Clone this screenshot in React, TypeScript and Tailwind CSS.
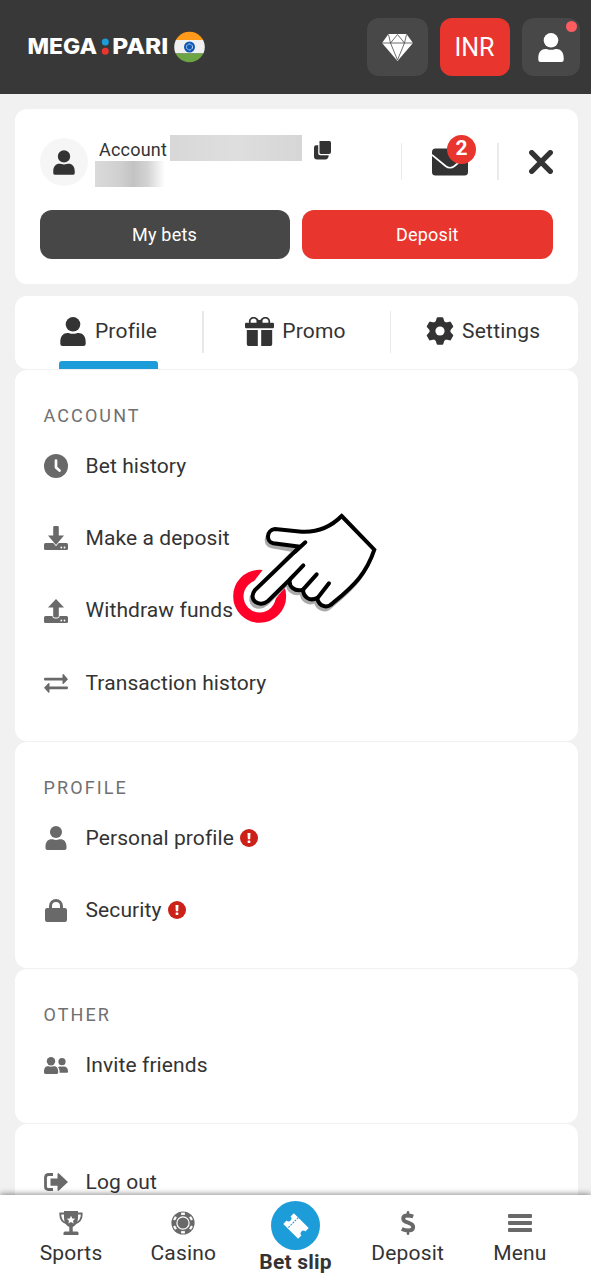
import type { ReactNode } from "react";

type IconProps = { className?: string };

const UserIcon = ({ className = "" }: IconProps) => (
  <svg viewBox="0 0 26 29" className={className} fill="currentColor">
    <circle cx="13" cy="7.3" r="7.3" />
    <path d="M0.3 25C0.3 19 3.5 16 7.5 16c1.7 0 3 .8 5.500.8s3.800-.8 5.500-.8c4 0 7.200 3 7.200 9v1.800q0 2.200-2.200 2.200h-21q-2.200 0-2.200-2.200z" />
  </svg>
);

const DiamondIcon = () => (
  <svg viewBox="0 0 31 27" className="h-[27px] w-[31px]">
    <path d="M6.500 0h18l6.500 9-15.500 18L0 9z" fill="#fff" />
    <path d="M0 9h31M6.500.5l2 8.500 7 17 7-17 2-8.500M8.500 9l7-8.500 7 8.500" fill="none" stroke="#484848" strokeWidth="0.8" />
  </svg>
);

const CopyIcon = () => (
  <svg viewBox="0 0 17 19" className="h-[19px] w-[17px]" fill="#333">
    <path d="M5.500 0h10q1.500 0 1.500 1.500V11q0 2-2 2H7q-1.500 0-1.500-1.500z" />
    <path d="M2 4.300h2.200v8q0 2 2 2h8.500c0 2.500-1.300 4.200-3.500 4.200H3q-3 0-3-3v-9q0-2.200 2-2.200z" />
  </svg>
);

const MailIcon = () => (
  <svg viewBox="0 0 36 28" className="h-7 w-9">
    <rect y="0.500" width="36" height="27" rx="3.500" fill="#333" />
    <path d="M0 6.800 13.500 18q4.500 3.500 9 0L36 6.800" fill="none" stroke="#fff" strokeWidth="1.700" />
  </svg>
);

const GiftIcon = () => (
  <svg viewBox="0 0 29 29" className="h-[29px] w-[29px]" fill="#333">
    <path d="M14.500 6C12 1 9 0 6.500 1.200 4.500 2.500 4.500 4.500 5 6M14.500 6C17 1 20 0 22.500 1.200c2 1.300 2 3.300 1.500 4.800" fill="none" stroke="#333" strokeWidth="1.700" />
    <path d="M11.500 3h6v4h-6z" />
    <rect y="5.700" width="29" height="5.600" rx="1.200" />
    <path d="M1.800 13h11v16H3.500q-1.700 0-1.700-1.700zM16.200 13h11v14.300q0 1.700-1.700 1.700h-9.300z" />
  </svg>
);

const GearIcon = () => (
  <svg viewBox="-14 -14 28 28" className="h-7 w-7" fill="#333">
    {[0, 60, 120, 180, 240, 300].map((a) => (
      <path key={a} d="M-4.800-8-3.300-13q.2-.8 1-.8h4.600q.8 0 1 .8L4.800-8z" transform={`rotate(${a})`} />
    ))}
    <circle r="10.500" />
    <circle r="4.600" fill="#fff" />
  </svg>
);

const ClockIcon = () => (
  <svg viewBox="0 0 24 24" className="h-6 w-6">
    <circle cx="12" cy="12" r="12" fill="#696969" />
    <path d="M12 6.500v7l3.500 3" fill="none" stroke="#fff" strokeWidth="2.700" strokeLinecap="round" strokeLinejoin="round" />
  </svg>
);

const Tray = () => (
  <>
    <path d="M1.500 17h21q1.500 0 1.500 1.500v4q0 1.500-1.500 1.500h-21Q0 24 0 22.500v-4Q0 17 1.500 17z" />
    <circle cx="17.300" cy="21.500" r="0.900" fill="#fff" />
    <circle cx="20.500" cy="21.500" r="0.900" fill="#fff" />
  </>
);

const DepositIcon = () => (
  <svg viewBox="0 0 24 24" className="h-6 w-6" fill="#696969">
    <Tray />
    <path d="M9.200 1q0-1 1-1h3.600q1 0 1 1v8.500H20L12 19 4 9.500h5.200z" stroke="#fff" strokeWidth="1.500" paintOrder="stroke" />
  </svg>
);

const WithdrawIcon = () => (
  <svg viewBox="0 0 24 24" className="h-6 w-6" fill="#696969">
    <Tray />
    <path d="M12 0 20 8.500h-5.200V17q0 1.500-1.500 1.500h-2.600q-1.500 0-1.500-1.500V8.500H4z" stroke="#fff" strokeWidth="1.800" paintOrder="stroke" />
  </svg>
);

const SwapIcon = () => (
  <svg viewBox="0 0 24 19" className="h-[19px] w-6" fill="#696969">
    <path d="M1 3.800h17.500V1q0-1.300 1.200-.7L24 5.200l-4.300 4.500q-1.200.6-1.200-.8V6.600H1Q0 6.600 0 5.200T1 3.800zM23 12.400H5.500V10q0-1.300-1.200-.7L0 13.800l4.300 4.700q1.200.6 1.200-.8V15.200H23q1 0 1-1.400t-1-1.400z" />
  </svg>
);

const LockIcon = () => (
  <svg viewBox="0 0 22 23" className="h-[23px] w-[22px]" fill="#696969">
    <path d="M5.500 11V7a5.500 5.500 0 0 1 11 0v4" fill="none" stroke="#696969" strokeWidth="3" />
    <rect y="9" width="22" height="14" rx="2.200" />
  </svg>
);

const FriendsIcon = () => (
  <svg viewBox="0 0 24 17" className="h-[17px] w-6" fill="#696969">
    <circle cx="7" cy="4.200" r="4.200" />
    <path d="M0 15c0-4 1.500-5.700 4-5.700 1 0 1.600.4 3 .4s2-.4 3-.4c2.500 0 4.200 1.700 4.200 5.700v.6q0 1.400-1.400 1.400H1.400Q0 17 0 15.600z" />
    <circle cx="18" cy="4.700" r="3.600" />
    <path d="M14 10.300c.8-.6 1.600-.9 4-.6 4-.7 6 1.200 6 4.500 0 1.200-.4 1.600-1.200 1.600h-7.200c.2-2.300-.3-4.200-1.600-5.500z" />
  </svg>
);

const LogoutIcon = () => (
  <svg viewBox="0 0 24 18" className="h-[18px] w-6" fill="#696969">
    <path d="M9 1.500H4.500q-3 0-3 3v9q0 3 3 3H9" fill="none" stroke="#696969" strokeWidth="2.800" />
    <path d="M6.500 5.500h7V1q0-1.200 1.200-.7L24 9l-9.300 8.700q-1.200.5-1.200-.7v-4.300h-7z" />
  </svg>
);

const TrophyIcon = () => (
  <svg viewBox="0 0 24 24" className="h-6 w-6">
    <path d="M6 2.500H1.300C1 7 3 11 8 12.500M18 2.500h4.700C23 7 21 11 16 12.500" fill="none" stroke="#696969" strokeWidth="1.800" />
    <path d="M5 0h14v6c0 5-2 8.500-5.300 10v4.500H18q1.500 0 1.500 1.500v2h-15v-2q0-1.500 1.500-1.500h4.300V16C7 14.500 5 11 5 6z" fill="#696969" />
    <path d="m12 4.700 1.250 2.700 2.950.3-2.200 2 .65 2.900L12 11.100l-2.650 1.500.65-2.900-2.200-2 2.950-.3z" fill="#fff" />
  </svg>
);

const ChipIcon = () => (
  <svg viewBox="-12 -12 24 24" className="h-6 w-6">
    <circle r="11.600" fill="#696969" />
    {[0, 60, 120, 180, 240, 300].map((a) => (
      <rect key={a} x="-1.900" y="-10.400" width="3.800" height="2.300" fill="#fff" transform={`rotate(${a})`} />
    ))}
    <circle r="6.100" fill="none" stroke="#fff" strokeWidth="1.200" />
  </svg>
);

const TicketIcon = () => (
  <svg viewBox="-14 -14 28 28" className="h-7 w-7">
    <g transform="rotate(45)">
      <path d="M-10.500-7.500h21v4.700a2.800 2.800 0 0 0 0 5.600v4.700h-21V2.800a2.800 2.800 0 0 0 0-5.600z" fill="#fff" />
      <path d="M-4.300-7.500v15" stroke="#1c9cd9" strokeWidth="1" strokeDasharray="2 1" />
    </g>
  </svg>
);

const DollarIcon = () => (
  <svg viewBox="0 0 16 24" className="h-6 w-4" fill="none" stroke="#696969">
    <path d="M8 1.300v4M8 19v3.700" strokeWidth="2.600" strokeLinecap="round" />
    <path d="M13.200 5.500C9 4 3.200 3.700 3.200 7.700c0 5 10 3 10 8.200 0 4.400-6.600 4.300-11.400 2" strokeWidth="3.900" />
  </svg>
);

const MenuIcon = () => (
  <svg viewBox="0 0 24 18" className="h-[18px] w-6" fill="#696969">
    <rect width="24" height="4" rx="1" />
    <rect y="7" width="24" height="4" rx="1" />
    <rect y="14" width="24" height="4" rx="1" />
  </svg>
);

const AlertBadge = () => (
  <svg viewBox="0 0 18 18" className="mb-px ml-1.5 h-[18px] w-[18px]">
    <circle cx="9" cy="9" r="9" fill="#cb2119" />
    <path d="M7.500 4h3l-.3 6.200H7.800z" fill="#fff" />
    <rect x="7.600" y="11.400" width="2.800" height="2.500" rx="0.600" fill="#fff" />
  </svg>
);

const Logo = () => (
  <svg viewBox="0 0 178 32" className="h-8 w-[178px]">
    <g fill="#fff" fontFamily="Inter, sans-serif" fontWeight="800" fontSize="21">
      <text x="-0.500" y="23.200" textLength="69.500" lengthAdjust="spacingAndGlyphs">MEGA</text>
      <text x="84.300" y="23.200" textLength="56" lengthAdjust="spacingAndGlyphs">PARI</text>
    </g>
    <circle cx="77.300" cy="11" r="3.500" fill="#1c9cd9" />
    <circle cx="77.300" cy="20.300" r="3.500" fill="#e8362e" />
    <clipPath id="flag">
      <circle cx="161.500" cy="16" r="15.300" />
    </clipPath>
    <g clipPath="url(#flag)">
      <path d="M146 0h32v9h-32z" fill="#ff9a1a" />
      <path d="M146 9h32v13.500h-32z" fill="#f0f0f0" />
      <path d="M146 22.500h32V32h-32z" fill="#6da544" />
    </g>
    <circle cx="161.500" cy="16" r="5.500" fill="#0d57b7" />
    <circle cx="161.500" cy="16" r="3" fill="none" stroke="#e4ecf5" strokeWidth="0.900" strokeDasharray="2.400 0.750" />
  </svg>
);

const PointerHand = () => (
  <svg viewBox="0 0 510 420" className="pointer-events-none absolute left-[220px] top-[500px] h-[140px] w-[170px]" strokeLinecap="round" strokeLinejoin="round">
    <circle cx="119" cy="289" r="64" fill="none" stroke="#ff0028" strokeWidth="31" />
    <path d="M235 140 123 285" stroke="#fff" strokeWidth="84" />
    <path
      d="M365 48 463 149C440 218 405 255 340 308C320 329 297 318 291 294C270 305 250 292 249 269C225 276 204 260 210 238L145 302C118 325 82 300 105 270L228 142 160 130C138 126 138 90 165 87L245 95C300 98 335 78 365 48z"
      transform="translate(-5 10)"
      fill="#aaa"
      stroke="#aaa"
      strokeWidth="10"
    />
    <path
      d="M365 48 463 149C440 218 405 255 340 308C320 329 297 318 291 294C270 305 250 292 249 269C225 276 204 260 210 238L145 302C118 325 82 300 105 270L240 140 160 130C138 126 138 90 165 87L245 95C300 98 335 78 365 48z"
      fill="#fff"
      stroke="#000"
      strokeWidth="12"
      strokeLinejoin="miter"
    />
    <path d="M225 155 256 127M210 238 250 196M249 269 290 223M291 296 327 250" fill="none" stroke="#000" strokeWidth="12" />
  </svg>
);

function Row({ icon, label, alert }: { icon: ReactNode; label: string; alert?: boolean }) {
  return (
    <li className="flex h-[72.400px] items-center">
      <span className="mb-px flex w-6 justify-center">{icon}</span>
      <span className="ml-[18px] text-[21px] tracking-[0.100px]">{label}</span>
      {alert && <AlertBadge />}
    </li>
  );
}

function Section({ title, children }: { title?: string; children: ReactNode }) {
  return (
    <section className="mb-[1.500px] rounded-xl bg-white px-[28.500px] pb-[20.800px] pt-[22px]">
      {title && <h2 className="pb-[1.700px] pt-[9.500px] text-[18px] leading-[27px] tracking-[2.100px] text-[#707070]">{title}</h2>}
      <ul>{children}</ul>
    </section>
  );
}

const navItems = [
  { label: "Sports", icon: <TrophyIcon /> },
  { label: "Casino", icon: <ChipIcon /> },
  { label: "Bet slip", icon: <TicketIcon />, active: true },
  { label: "Deposit", icon: <DollarIcon /> },
  { label: "Menu", icon: <MenuIcon /> },
];

export default function App() {
  return (
    <div className="relative flex h-[1280px] w-[591px] flex-col overflow-hidden bg-[#f1f1f1] font-['Roboto',sans-serif] text-[#333]">
      <header className="flex h-[94px] shrink-0 items-center bg-[#383838] pl-7 pr-[11.500px]">
        <Logo />
        <div className="ml-auto flex gap-3">
          <button className="flex h-[58px] w-[61px] items-center justify-center rounded-xl bg-[#484848]">
            <DiamondIcon />
          </button>
          <button className="h-[58px] w-[70px] rounded-xl bg-[#e8362e] pt-0.5 text-[25px] text-white">INR</button>
          <button className="relative flex h-[58px] w-[58px] items-center justify-center rounded-xl bg-[#484848] text-white">
            <UserIcon className="h-[29px] w-[26px]" />
            <span className="absolute right-[3px] top-[3px] h-[11px] w-[11px] rounded-full bg-[#ff5c5f]" />
          </button>
        </div>
      </header>

      <main className="min-h-0 flex-1 overflow-hidden pl-[15px] pr-[13.500px] pt-[15px]">
        {/* Account summary */}
        <section className="h-[174.500px] rounded-xl bg-white pl-[24.500px] pr-[24.500px] pt-[26px]">
          <div className="flex h-[52px] items-start">
            <div className="mt-[3px] flex h-12 w-12 items-center justify-center rounded-full bg-[#f6f6f6]">
              <UserIcon className="h-[25px] w-[22px]" />
            </div>
            <div className="ml-[7.500px]">
              <div className="flex h-[26px] items-center">
                <span className="ml-1 w-[71px] pt-[3px] text-[18px] leading-[23px] tracking-[0.200px]">Account</span>
                <span className="h-[26px] w-[132px] bg-gradient-to-r from-[#d8d8d8] via-[#dedede] to-[#d6d6d6]" />
                <span className="ml-3 mt-[4px]">
                  <CopyIcon />
                </span>
              </div>
              <div className="h-[26px] w-[70px] bg-[linear-gradient(90deg,#dadada_0%,#d0d0d0_35%,#c3c3c3_55%,#d3d3d3_75%,#ffffff_100%)]" />
            </div>
            <div className="ml-auto mt-[8px] flex items-center">
              <span className="h-[37px] w-[1.500px] bg-[#ebebeb]" />
              <span className="relative ml-[30px] mr-[29px]">
                <MailIcon />
                <span className="absolute left-[15px] top-[-13px] flex h-[29px] w-[29px] items-center justify-center rounded-full bg-[#e8362e] text-[21px] font-bold text-white">
                  2
                </span>
              </span>
              <span className="h-[37px] w-[1.500px] bg-[#ebebeb]" />
              <svg viewBox="0 0 24 24" className="ml-[30.500px] h-6 w-6">
                <path d="m2.700 2.700 18.600 18.600m0-18.600-18.600 18.600" stroke="#333" strokeWidth="5.300" strokeLinecap="round" />
              </svg>
            </div>
          </div>
          <div className="mt-[23px] flex gap-3 text-[18px] tracking-[0.200px] text-white">
            <button className="h-[49px] w-[250px] rounded-xl bg-[#474747]">My bets</button>
            <button className="h-[49px] flex-1 rounded-xl bg-[#e8362e]">Deposit</button>
          </div>
        </section>

        {/* Tabs */}
        <nav className="mb-[1.500px] mt-3 flex h-[73px] rounded-xl bg-white text-[21px] tracking-[0.200px]">
          <div className="flex w-[187px] flex-col items-center justify-between pt-[21px]">
            <span className="flex h-[29px] items-center gap-[9px]">
              <UserIcon className="h-[29px] w-[26px]" />
              <span className="pt-px">Profile</span>
            </span>
            <span className="h-2 w-[99px] rounded-t-[3px] bg-[#1c9cd9]" />
          </div>
          <span className="mt-[15px] h-[42px] w-[1.500px] bg-[#e8e8e8]" />
          <div className="flex h-[71px] w-[186px] items-center justify-center gap-2 pr-[2px]">
            <GiftIcon />
            <span className="pt-px">Promo</span>
          </div>
          <span className="mt-[15px] h-[42px] w-[1.500px] bg-[#e8e8e8]" />
          <div className="flex h-[71px] flex-1 items-center justify-center gap-2 pr-[2px]">
            <GearIcon />
            <span className="pt-px">Settings</span>
          </div>
        </nav>

        <Section title="ACCOUNT">
          <Row icon={<ClockIcon />} label="Bet history" />
          <Row icon={<DepositIcon />} label="Make a deposit" />
          <Row icon={<WithdrawIcon />} label="Withdraw funds" />
          <Row icon={<SwapIcon />} label="Transaction history" />
        </Section>
        <Section title="PROFILE">
          <Row icon={<UserIcon className="h-6 w-[22px] text-[#696969]" />} label="Personal profile" alert />
          <Row icon={<LockIcon />} label="Security" alert />
        </Section>
        <Section title="OTHER">
          <Row icon={<FriendsIcon />} label="Invite friends" />
        </Section>
        <Section>
          <Row icon={<LogoutIcon />} label="Log out" />
        </Section>
      </main>

      <nav className="relative flex h-[85px] shrink-0 bg-white px-[15px] shadow-[0_-1px_6px_rgba(0,0,0,0.45)]">
        {navItems.map((item) =>
          item.active ? (
            <div key={item.label} className="flex flex-1 flex-col items-center pt-1.5">
              <span className="flex h-[49px] w-[49px] items-center justify-center rounded-full bg-[#1c9cd9]">{item.icon}</span>
              <span className="text-[21px] font-bold leading-[25px] tracking-[0.200px]">{item.label}</span>
            </div>
          ) : (
            <div key={item.label} className="flex flex-1 flex-col items-center pt-4">
              <span className="flex h-6 items-center">{item.icon}</span>
              <span className="mt-[5px] text-[21px] leading-[26px] tracking-[0.200px]">{item.label}</span>
            </div>
          ),
        )}
      </nav>

      <PointerHand />
    </div>
  );
}
